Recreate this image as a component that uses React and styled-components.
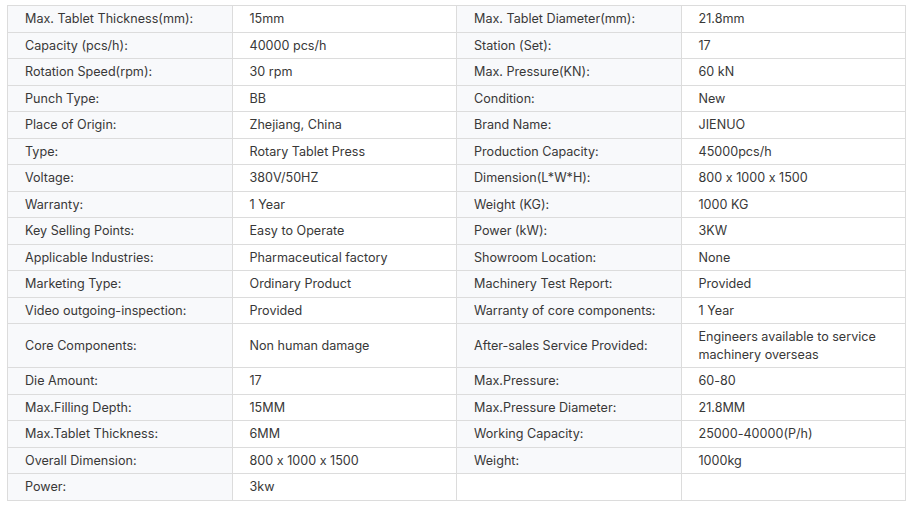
import styled, { createGlobalStyle } from "styled-components";

const GlobalStyle = createGlobalStyle`
  html, body {
    margin: 0;
    padding: 0;
    background: #fff;
  }
  body {
    font-family: Inter, "Noto Sans", "Liberation Sans", sans-serif;
    font-feature-settings: "calt" 0;
    color: #333;
  }
`;

const Wrapper = styled.div`
  padding: 5px 6px 0 7px;
`;

const Table = styled.table`
  width: 899px;
  border-collapse: collapse;
  table-layout: fixed;
  border: 1px solid #dcdcdc;
  font-size: 12.6px;
`;

const Cell = styled.td`
  border: 1px solid #dcdcdc;
  padding: 4px 17px;
  line-height: 17.5px;
  height: 17.5px;
  vertical-align: middle;
  background: ${(props) => (props.label ? "#f8f9fb" : "#fff")};
  color: #383838;
  font-feature-settings: "calt" 0;
`;

const specs = [
  ["Max. Tablet Thickness(mm):", "15mm", "Max. Tablet Diameter(mm):", "21.8mm"],
  ["Capacity (pcs/h):", "40000 pcs/h", "Station (Set):", "17"],
  ["Rotation Speed(rpm):", "30 rpm", "Max. Pressure(KN):", "60 kN"],
  ["Punch Type:", "BB", "Condition:", "New"],
  ["Place of Origin:", "Zhejiang, China", "Brand Name:", "JIENUO"],
  ["Type:", "Rotary Tablet Press", "Production Capacity:", "45000pcs/h"],
  ["Voltage:", "380V/50HZ", "Dimension(L*W*H):", "800 x 1000 x 1500"],
  ["Warranty:", "1 Year", "Weight (KG):", "1000 KG"],
  ["Key Selling Points:", "Easy to Operate", "Power (kW):", "3KW"],
  ["Applicable Industries:", "Pharmaceutical factory", "Showroom Location:", "None"],
  ["Marketing Type:", "Ordinary Product", "Machinery Test Report:", "Provided"],
  ["Video outgoing-inspection:", "Provided", "Warranty of core components:", "1 Year"],
  [
    "Core Components:",
    "Non human damage",
    "After-sales Service Provided:",
    "Engineers available to service machinery overseas",
  ],
  ["Die Amount:", "17", "Max.Pressure:", "60-80"],
  ["Max.Filling Depth:", "15MM", "Max.Pressure Diameter:", "21.8MM"],
  ["Max.Tablet Thickness:", "6MM", "Working Capacity:", "25000-40000(P/h)"],
  ["Overall Dimension:", "800 x 1000 x 1500", "Weight:", "1000kg"],
  ["Power:", "3kw", "", ""],
];

const App = () => {
  return (
    <>
      <GlobalStyle />
      <Wrapper>
        <Table>
          <tbody>
            {specs.map((row, i) => (
              <tr key={i}>
                {row.map((text, j) => (
                  <Cell key={j} label={j % 2 === 0 && text !== ""}>
                    {text}
                  </Cell>
                ))}
              </tr>
            ))}
          </tbody>
        </Table>
      </Wrapper>
    </>
  );
};

export default App;
